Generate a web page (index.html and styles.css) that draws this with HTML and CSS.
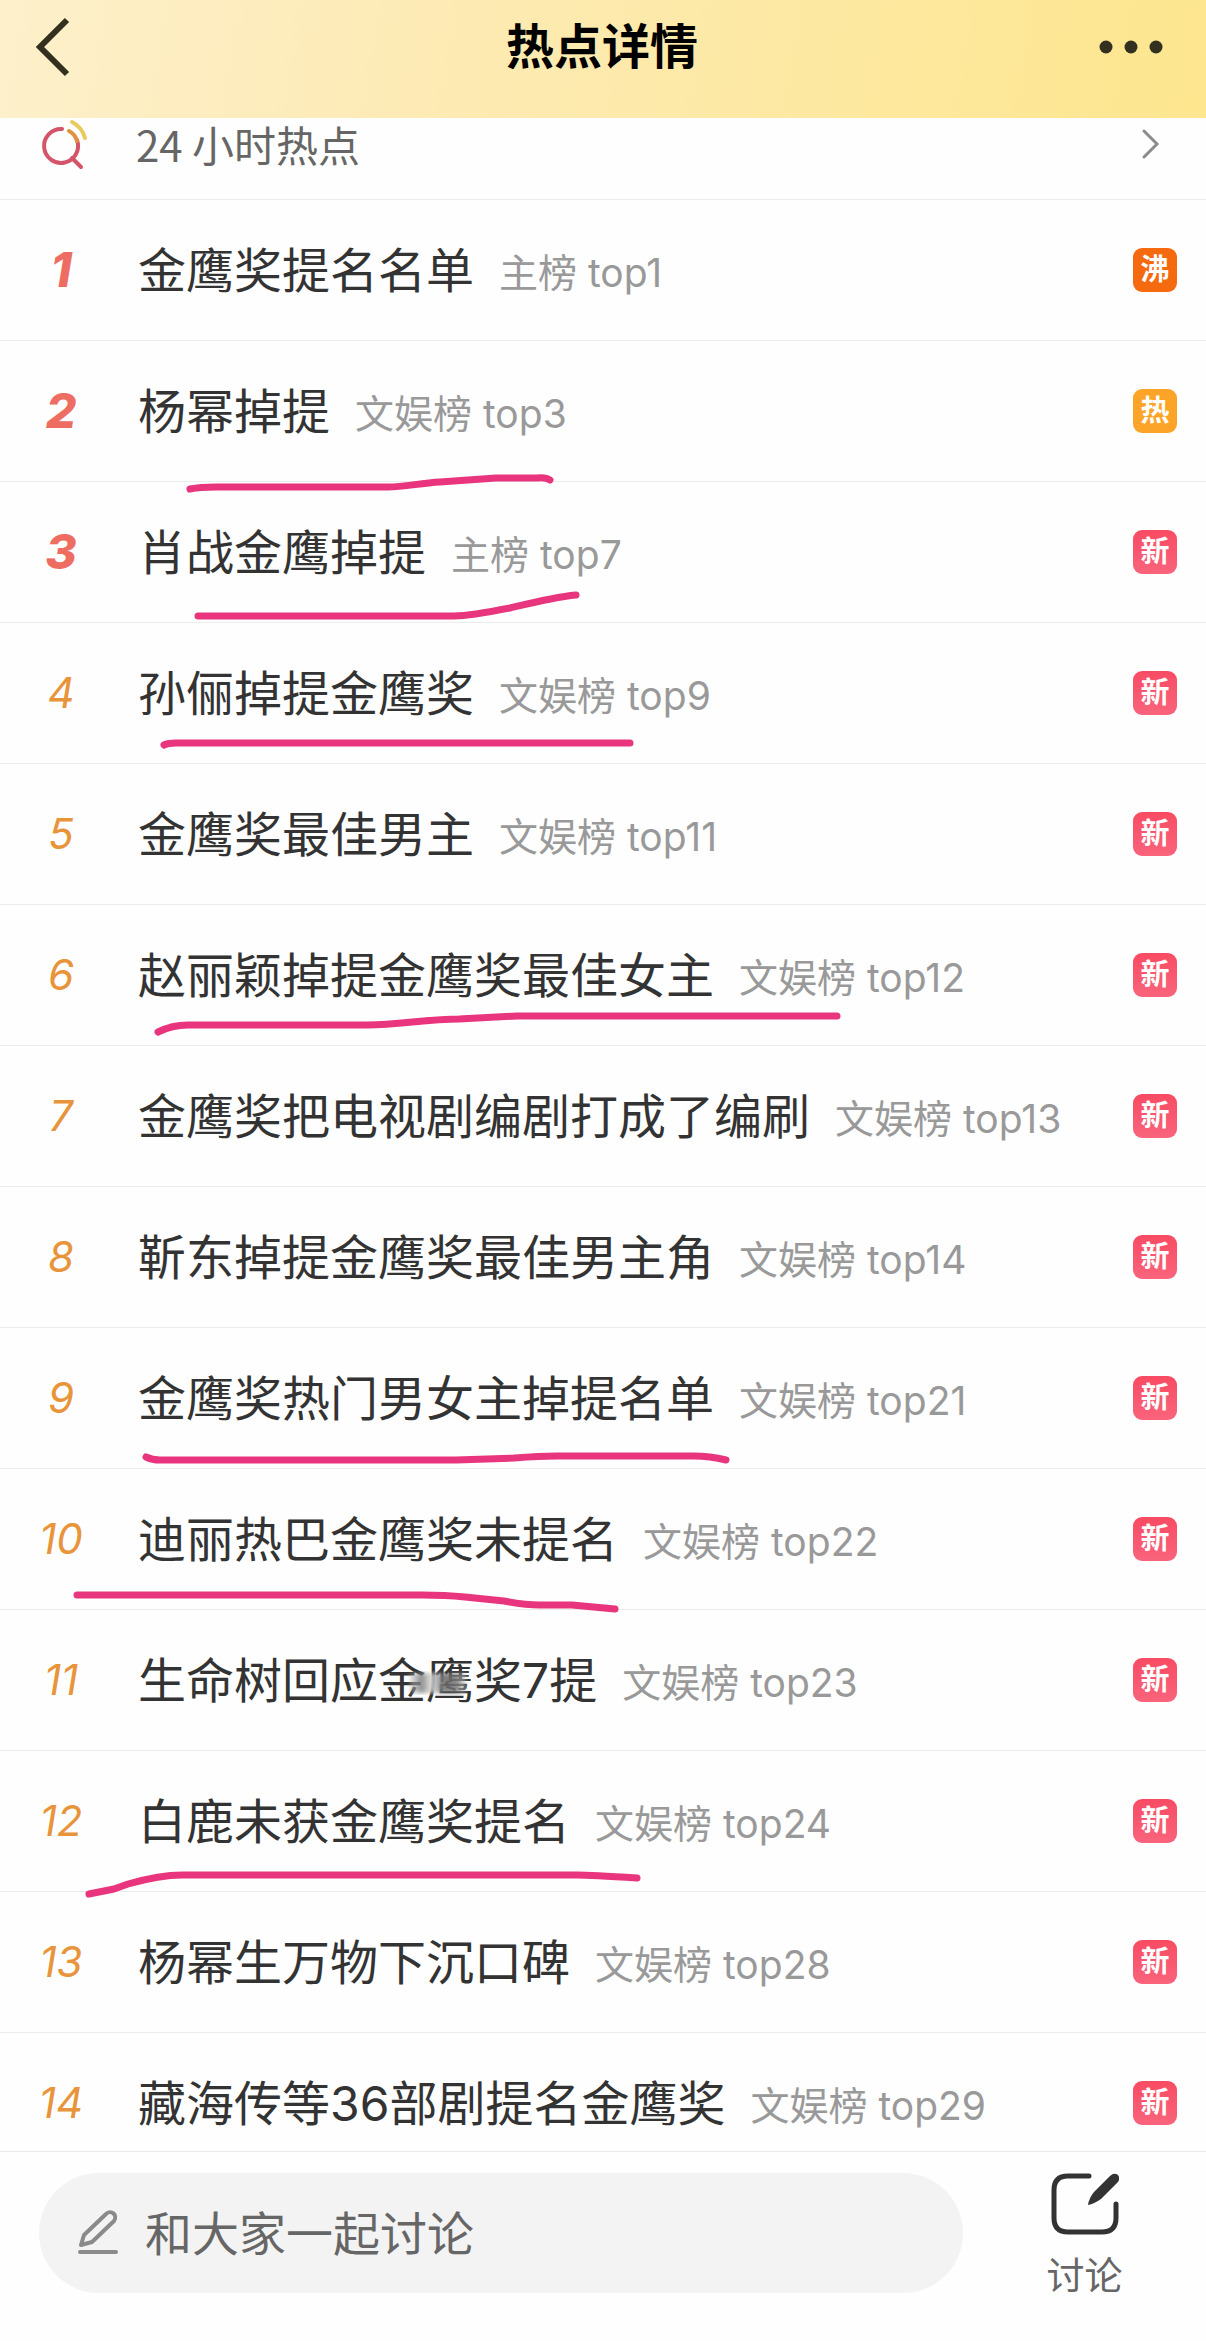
FILE: index.html
```
<!DOCTYPE html>
<html lang="zh-CN">
<head>
    <meta charset="UTF-8">
    <meta name="viewport" content="width=device-width, initial-scale=1">
    <title>热点详情</title>
    <link rel="stylesheet" href="styles.css">
</head>
<body>
    <header class="topbar">
        <button class="icon-btn" aria-label="返回">
            <svg width="40" height="60" viewBox="0 0 40 60" fill="none" stroke="#33301f" stroke-width="6"><path d="M33 3 L6 30 L33 57"/></svg>
        </button>
        <h1>热点详情</h1>
        <button class="icon-btn" aria-label="更多">
            <svg width="66" height="14" viewBox="0 0 66 14" fill="#33301f"><circle cx="8" cy="7" r="6.5"/><circle cx="33" cy="7" r="6.5"/><circle cx="58" cy="7" r="6.5"/></svg>
        </button>
    </header>

    <main class="content">
        <a class="topic" href="#">
            <svg width="52" height="54" viewBox="0 0 52 54" fill="none" stroke-width="4" stroke-linecap="round">
                <path d="M24 12 A17 17 0 1 0 39 23 M34 41 L43 50" stroke="#d4546a"/>
                <path d="M31 14 Q37 17 39 24" stroke="#e0923f"/>
                <path d="M34 5 Q44 10 47 21" stroke="#e8cb5c"/>
            </svg>
            <span>24 小时热点</span>
            <svg width="20" height="34" viewBox="0 0 20 34" fill="none" stroke="#8c8c8c" stroke-width="3" stroke-linecap="round"><path d="M4 4 L17 17 L4 30"/></svg>
        </a>

        <ol class="list">
            <li><b class="rank top">1</b><a href="#">金鹰奖提名名单</a><span class="board">主榜 top1</span><i class="tag boil">沸</i></li>
            <li><b class="rank top">2</b><a href="#">杨幂掉提</a><span class="board">文娱榜 top3</span><i class="tag hot">热</i></li>
            <li><b class="rank top">3</b><a href="#">肖战金鹰掉提</a><span class="board">主榜 top7</span><i class="tag new">新</i></li>
            <li><b class="rank">4</b><a href="#">孙俪掉提金鹰奖</a><span class="board">文娱榜 top9</span><i class="tag new">新</i></li>
            <li><b class="rank">5</b><a href="#">金鹰奖最佳男主</a><span class="board">文娱榜 top11</span><i class="tag new">新</i></li>
            <li><b class="rank">6</b><a href="#">赵丽颖掉提金鹰奖最佳女主</a><span class="board">文娱榜 top12</span><i class="tag new">新</i></li>
            <li><b class="rank">7</b><a href="#">金鹰奖把电视剧编剧打成了编刷</a><span class="board">文娱榜 top13</span><i class="tag new">新</i></li>
            <li><b class="rank">8</b><a href="#">靳东掉提金鹰奖最佳男主角</a><span class="board">文娱榜 top14</span><i class="tag new">新</i></li>
            <li><b class="rank">9</b><a href="#">金鹰奖热门男女主掉提名单</a><span class="board">文娱榜 top21</span><i class="tag new">新</i></li>
            <li><b class="rank">10</b><a href="#">迪丽热巴金鹰奖未提名</a><span class="board">文娱榜 top22</span><i class="tag new">新</i></li>
            <li><b class="rank">11</b><a href="#">生命树回应金鹰奖7提</a><span class="board">文娱榜 top23</span><i class="tag new">新</i></li>
            <li><b class="rank">12</b><a href="#">白鹿未获金鹰奖提名</a><span class="board">文娱榜 top24</span><i class="tag new">新</i></li>
            <li><b class="rank">13</b><a href="#">杨幂生万物下沉口碑</a><span class="board">文娱榜 top28</span><i class="tag new">新</i></li>
            <li><b class="rank">14</b><a href="#">藏海传等36部剧提名金鹰奖</a><span class="board">文娱榜 top29</span><i class="tag new">新</i></li>
        </ol>
    </main>

    <footer class="bottom">
        <label class="comment">
            <svg width="44" height="54" viewBox="0 0 44 54" fill="none" stroke="#8a8a8a" stroke-width="4" stroke-linecap="round" stroke-linejoin="round"><path d="M4 39 L7 29 L29 8 C34 3 41 9 37 15 L15 36 Z M3 46 H39"/></svg>
            <input type="text" placeholder="和大家一起讨论" aria-label="和大家一起讨论">
        </label>
        <button class="discuss">
            <svg width="68" height="62" viewBox="0 0 68 62" fill="none" stroke="#333" stroke-width="5" stroke-linecap="round">
                <path d="M38 3 H17 Q3 3 3 17 V45 Q3 59 17 59 H51 Q65 59 65 45 V31"/>
                <path d="M37 32 Q38 25 43 19 L59 3 Q63 -1 67 2 Q70 6 66 10 L50 26 Q43 31 37 32Z" fill="#333" stroke="none"/>
            </svg>
            <span>讨论</span>
        </button>
    </footer>

    <!-- pen marks and smudge drawn over the list -->
    <svg class="marks" aria-hidden="true">
        <defs>
            <linearGradient id="smudge">
                <stop offset="0" stop-color="#bbb" stop-opacity="0.5"/>
                <stop offset="0.2" stop-color="#777"/>
                <stop offset="0.38" stop-color="#ddd"/>
                <stop offset="0.6" stop-color="#666"/>
                <stop offset="0.85" stop-color="#777"/>
                <stop offset="1" stop-color="#ccc" stop-opacity="0.5"/>
            </linearGradient>
            <filter id="soft"><feGaussianBlur stdDeviation="2"/></filter>
        </defs>
        <rect x="410" y="1673" width="56" height="20" fill="url(#smudge)" stroke="none" opacity="0.85" filter="url(#soft)"/>
        <path d="M190 489 Q200 487 216 487 H388 C405 487 420 483 440 482 L496 478 H537 Q546 477 550 480"/>
        <path d="M198 616 H454 Q470 616 510 608 C535 602 555 597 576 595"/>
        <path d="M164 745 Q168 743 176 743 H630"/>
        <path d="M158 1032 Q172 1025 188 1025 H367 C400 1025 425 1019 459 1019 L517 1016 H837"/>
        <path d="M146 1457 Q152 1460 160 1460 H456 L514 1458 Q540 1456 557 1456 H693 Q710 1456 726 1460"/>
        <path d="M77 1595 H422 Q445 1595 465 1597 L504 1601 Q525 1605 540 1605 H572 L615 1609"/>
        <path d="M89 1894 L114 1889 L128 1884 Q160 1875 182 1875 H577 Q590 1875 637 1878"/>
    </svg>
</body>
</html>
```
FILE: styles.css
```
* {
    box-sizing: border-box;
}
body {
    margin: 0;
    position: relative;
    height: 100vh;
    display: flex;
    flex-direction: column;
    background: #fefefe;
    color: #333;
    font-family: Inter, "Noto Sans CJK SC", sans-serif;
}
button {
    border: 0;
    padding: 0;
    background: none;
    font-family: inherit;
    cursor: pointer;
}
a {
    color: inherit;
    text-decoration: none;
}
svg {
    flex: none;
    display: block;
}
.topbar {
    flex: none;
    height: 118px;
    padding: 0 36px 24px 34px;
    display: flex;
    align-items: center;
    justify-content: space-between;
    background: linear-gradient(100deg, #fdf0cb 0%, #fdebb8 30%, #fde9a6 60%, #fde68e 100%);
}
.topbar h1 {
    margin: 0;
    font-size: 48px;
    line-height: 60px;
    font-weight: 700;
    color: #000;
}
.icon-btn {
    width: 72px;
    display: flex;
}
.content {
    flex: 1;
    min-height: 0;
    display: flex;
    flex-direction: column;
}
.topic {
    flex: none;
    height: 82px;
    padding: 0 46px 30px 38px;
    display: flex;
    align-items: center;
    border-bottom: 1px solid #ebebeb;
    font-family: "Noto Sans CJK SC", sans-serif;
    font-size: 42px;
    line-height: 48px;
    color: #666;
}
.topic span {
    flex: 1;
    margin-left: 46px;
}
.list {
    flex: 1;
    min-height: 0;
    margin: 0;
    padding: 0;
    overflow: hidden;
    list-style: none;
}
.list li {
    height: 141px;
    padding-right: 29px;
    display: flex;
    align-items: center;
    border-bottom: 1px solid #ebebeb;
    font-size: 48px;
    line-height: 64px;
    white-space: nowrap;
}
.list a {
    margin-top: 2px;
}
.rank {
    width: 122px;
    margin-right: 16px;
    text-align: center;
    font-size: 42px;
    font-weight: 400;
    font-style: italic;
    color: #e8943a;
}
.rank.top {
    font-size: 48px;
    font-weight: 800;
    color: #ee6d63;
}
.board {
    margin: 6px 0 0 25px;
    font-size: 39px;
    color: #999;
}
.tag {
    width: 44px;
    height: 44px;
    margin-left: auto;
    border-radius: 9px;
    text-align: center;
    font-size: 29px;
    line-height: 44px;
    font-style: normal;
    font-weight: 700;
    color: #fff;
}
.boil {
    background: #f5690f;
}
.hot {
    background: #fba428;
}
.new {
    background: linear-gradient(#f84b63, #f9647c);
}
.bottom {
    flex: none;
    height: 190px;
    padding: 21px 0 0 39px;
    display: flex;
    align-items: flex-start;
    border-top: 1px solid #e8e8e8;
}
.comment {
    flex: 1;
    min-width: 0;
    height: 120px;
    padding: 0 38px;
    display: flex;
    align-items: center;
    gap: 24px;
    border-radius: 60px;
    background: #f3f3f3;
}
.comment input {
    flex: 1;
    min-width: 0;
    padding: 0;
    border: 0;
    outline: 0;
    background: none;
    font-family: inherit;
    font-size: 47px;
    color: #333;
}
.comment input::placeholder {
    color: #666;
    opacity: 1;
}
.discuss {
    width: 243px;
    display: flex;
    flex-direction: column;
    align-items: center;
    gap: 12px;
    font-size: 38px;
    line-height: 56px;
    color: #666;
}
.marks {
    position: absolute;
    top: 0;
    left: 0;
    width: 100%;
    height: 100%;
    pointer-events: none;
    fill: none;
    stroke: #e8357d;
    stroke-width: 7px;
    stroke-linecap: round;
    stroke-linejoin: round;
}
```
